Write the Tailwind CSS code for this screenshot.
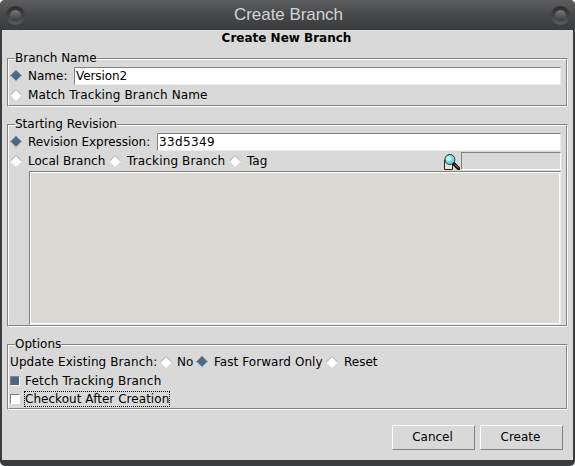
<!DOCTYPE html>
<html lang="en">
<head>
    <meta charset="UTF-8">
    <meta name="viewport" content="width=device-width, initial-scale=1.0">
    <title>Create Branch</title>
    <script src="https://cdn.jsdelivr.net/npm/@tailwindcss/browser@4"></script>
</head>
<body class="bg-white overflow-hidden">
    <!-- Shared radio glyphs -->
    <svg class="hidden">
        <symbol id="radio-off" viewBox="0 0 12 12">
            <path d="M6 0 12 6 6 12 0 6Z" fill="#fff"/>
            <path d="M.5 6 6 .5 11.5 6" fill="none" stroke="#828282" stroke-width=".8"/>
        </symbol>
        <symbol id="radio-on" viewBox="0 0 12 12">
            <path d="M6 0 12 6 6 12 0 6Z" fill="#4a6984"/>
            <path d="M.5 6 6 .5 11.5 6" fill="none" stroke="#828282" stroke-width=".8"/>
            <path d="M.5 6 6 11.5 11.5 6" fill="none" stroke="#fff"/>
        </symbol>
    </svg>

    <div class="w-[575px] h-[466px] flex flex-col rounded-[5px] overflow-hidden bg-[#3b3c3d] font-['DejaVu_Sans',sans-serif] text-[12px] text-black whitespace-nowrap">
        <!-- Title bar -->
        <div class="h-[30px] shrink-0 flex items-center justify-between pl-[6px] pr-[5px] bg-linear-to-b from-[#5c5d5e] via-[#47484a] to-[#3a3b3c]">
            <div class="size-[19px] rounded-full bg-linear-to-b from-[#2b2b2c] to-[#5a5b5c] p-1">
                <div class="size-[11px] rounded-full bg-linear-to-b from-[#7a7a7a] to-[#3c3c3c]"></div>
            </div>
            <h1 class="pl-px font-['Liberation_Sans',sans-serif] text-[17px] leading-[30px] tracking-[-0.05px] text-[#d3d3d3]">Create Branch</h1>
            <div class="size-[19px] rounded-full bg-linear-to-b from-[#2b2b2c] to-[#5a5b5c] p-1">
                <div class="size-[11px] rounded-full bg-linear-to-b from-[#7a7a7a] to-[#3c3c3c]"></div>
            </div>
        </div>

        <!-- Window body -->
        <div class="h-[430px] shrink-0 mx-[2px] px-[5px] bg-[#d9d9d9]">
            <h2 class="h-7 pt-px pr-[2px] text-center font-bold leading-[14px]">Create New Branch</h2>

            <!-- Branch Name -->
            <section class="relative w-[561px] h-[49px] border border-t-[#828282] border-l-[#828282] border-b-white border-r-white">
                <h3 class="absolute left-[7px] -top-[9px] h-4 leading-4 bg-[#d9d9d9]">Branch Name</h3>
                <div class="h-full border border-t-white border-l-white border-b-[#828282] border-r-[#828282] pt-[7px] pl-px">
                    <div class="flex items-center h-[18px]">
                        <svg class="size-3"><use href="#radio-on"/></svg>
                        <span class="ml-[6px] w-[46px]">Name:</span>
                        <div class="w-[487px] h-[18px] border border-t-[#828282] border-l-[#828282] border-b-[#ededed] border-r-[#ededed] bg-white pl-px leading-4 tracking-[-0.1px]">Version2</div>
                    </div>
                    <div class="flex items-center h-[18px] mt-px">
                        <svg class="size-3"><use href="#radio-off"/></svg>
                        <span class="ml-[6px] tracking-[0.15px]">Match Tracking Branch Name</span>
                    </div>
                </div>
            </section>

            <!-- Starting Revision -->
            <section class="relative w-[561px] h-[203px] mt-[17px] border border-t-[#828282] border-l-[#828282] border-b-white border-r-white">
                <h3 class="absolute left-[7px] -top-[9px] h-4 leading-4 bg-[#d9d9d9]">Starting Revision</h3>
                <div class="h-full border border-t-white border-l-white border-b-[#828282] border-r-[#828282] pt-[7px] pl-px">
                    <div class="flex items-center h-[18px]">
                        <svg class="size-3"><use href="#radio-on"/></svg>
                        <span class="ml-[6px] w-[129px] tracking-[-0.05px]">Revision Expression:</span>
                        <div class="w-[404px] h-[18px] border border-t-[#828282] border-l-[#828282] border-b-[#ededed] border-r-[#ededed] bg-white pl-px leading-4 tracking-[0.36px]">33d5349</div>
                    </div>
                    <div class="flex items-center h-[18px] mt-px">
                        <svg class="size-3"><use href="#radio-off"/></svg>
                        <span class="ml-[6px] w-[81px]">Local Branch</span>
                        <svg class="size-3"><use href="#radio-off"/></svg>
                        <span class="ml-[6px] w-[102px] tracking-[0.15px]">Tracking Branch</span>
                        <svg class="size-3"><use href="#radio-off"/></svg>
                        <span class="ml-[6px]">Tag</span>
                        <!-- Filter icon -->
                        <svg class="ml-auto mr-px mt-px size-4" viewBox="0 0 16 16">
                            <path d="M.5 6v9.5h8V9z" fill="#f3dfd0" stroke="#222"/>
                            <path d="M9.5 9.5 14.5 14.5" stroke="#111" stroke-width="3.4" stroke-linecap="round"/>
                            <path d="M11 10.5 14.5 14" stroke="#999"/>
                            <circle cx="5.9" cy="5.5" r="5" fill="#78d5df" stroke="#333"/>
                            <circle cx="4.9" cy="4.5" r="2.6" fill="#c9f4f7"/>
                        </svg>
                        <div class="w-[100px] h-[18px] mr-[5px] border border-t-[#828282] border-l-[#828282] border-b-white border-r-white"></div>
                    </div>
                    <div class="w-[532px] h-[154px] mt-px ml-[19px] border border-t-[#828282] border-l-[#828282] border-b-[#ededed] border-r-[#ededed]">
                        <div class="h-full border border-white bg-[#dad9d3]"></div>
                    </div>
                </div>
            </section>

            <!-- Options -->
            <section class="relative w-[561px] h-[66px] mt-[17px] border border-t-[#828282] border-l-[#828282] border-b-white border-r-white">
                <h3 class="absolute left-[7px] -top-[9px] h-4 leading-4 bg-[#d9d9d9]">Options</h3>
                <div class="h-full border border-t-white border-l-white border-b-[#828282] border-r-[#828282] pt-[7px] pl-px">
                    <div class="flex items-center h-[18px]">
                        <span class="w-[150px] tracking-[0.1px]">Update Existing Branch:</span>
                        <svg class="size-3"><use href="#radio-off"/></svg>
                        <span class="ml-[5px] w-[19px]">No</span>
                        <svg class="size-3"><use href="#radio-on"/></svg>
                        <span class="ml-[6px] w-[112px] tracking-[0.07px]">Fast Forward Only</span>
                        <svg class="size-3"><use href="#radio-off"/></svg>
                        <span class="ml-[6px]">Reset</span>
                    </div>
                    <div class="flex items-center h-[18px] mt-px">
                        <div class="size-[10px] border border-t-[#828282] border-l-[#828282] border-b-white border-r-white bg-[#4a6984]"></div>
                        <span class="ml-[5px] tracking-[0.19px]">Fetch Tracking Branch</span>
                    </div>
                    <div class="flex items-center h-[18px]">
                        <div class="size-[10px] border border-t-[#828282] border-l-[#828282] border-b-white border-r-white bg-white"></div>
                        <span class="ml-1 w-[146px] h-4 leading-[14px] tracking-[0.04px] border border-dotted border-black">Checkout After Creation</span>
                    </div>
                </div>
            </section>

            <!-- Buttons -->
            <div class="flex justify-end gap-[5px] mt-[15px] pr-[5px]">
                <button class="w-[83px] h-[25px] pr-[2px] pb-[2px] border border-t-white border-l-white border-b-[#828282] border-r-[#828282]">Cancel</button>
                <button class="w-[83px] h-[25px] pr-[2px] pb-[2px] border border-t-white border-l-white border-b-[#828282] border-r-[#828282]">Create</button>
            </div>
        </div>
    </div>
</body>
</html>
